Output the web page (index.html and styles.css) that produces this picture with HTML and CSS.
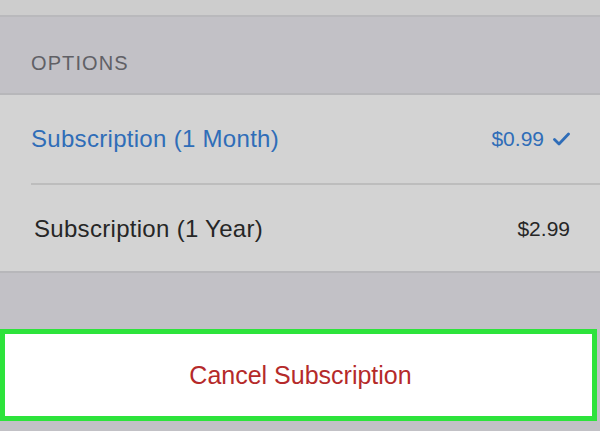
FILE: index.html
```html
<!DOCTYPE html>
<html lang="en">
<head>
    <meta charset="UTF-8">
    <meta name="viewport" content="width=device-width, initial-scale=1.0">
    <title>Subscription Options</title>
    <link rel="stylesheet" href="styles.css">
</head>
<body>
    <div class="screen">
        <div class="top-strip"></div>

        <div class="section-header">OPTIONS</div>

        <div class="options-list">
            <div class="option selected">
                <span class="option-name">Subscription (1 Month)</span>
                <span class="option-price">
                    $0.99
                    <svg class="check" width="17" height="14" viewBox="0 0 17 14">
                        <path d="M1.5 7.5 L6 12 L15.5 2" fill="none" stroke="#2f6db8" stroke-width="2.8" stroke-linecap="round" stroke-linejoin="round"/>
                    </svg>
                </span>
            </div>
            <div class="option">
                <span class="option-name">Subscription (1 Year)</span>
                <span class="option-price">$2.99</span>
            </div>
        </div>

        <div class="spacer"></div>

        <div class="cancel-wrap">
            <button class="cancel-btn">Cancel Subscription</button>
        </div>
    </div>
</body>
</html>
```

FILE: styles.css
```css
body {
    margin: 0;
    padding: 0;
    font-family: 'Liberation Sans', Arial, sans-serif;
    background-color: #c2c1c6;
    width: 600px;
    height: 431px;
    overflow: hidden;
}

.screen {
    display: flex;
    flex-direction: column;
    height: 431px;
}

.top-strip {
    height: 15px;
    background-color: #cdcdcd;
    border-bottom: 2px solid #b9b9bc;
}

.section-header {
    height: 78px;
    box-sizing: border-box;
    padding: 35px 0 0 31px;
    font-size: 20px;
    letter-spacing: 1.1px;
    color: #606065;
    background-color: #c2c1c6;
    border-bottom: 2px solid #b7b7ba;
}

.options-list {
    background-color: #d3d3d3;
    border-bottom: 2px solid #b7b7ba;
}

.option {
    display: flex;
    align-items: center;
    justify-content: space-between;
    height: 88px;
    margin-left: 31px;
    padding-right: 30px;
    box-sizing: border-box;
    font-size: 24px;
    color: #262626;
}

.option + .option {
    border-top: 2px solid #bdbdbd;
    padding-top: 2px;
}

.option-name {
    letter-spacing: 0.3px;
}

.option:nth-child(2) .option-name {
    padding-left: 3px;
}

.option-price {
    display: flex;
    align-items: center;
    gap: 9px;
    font-size: 21px;
}

.selected {
    color: #2f6db8;
}

.spacer {
    height: 56px;
}

.cancel-wrap {
    display: flex;
    padding-right: 3px;
}

.cancel-btn {
    width: 597px;
    height: 92px;
    background-color: #ffffff;
    border: 5px solid #2de33b;
    font-family: 'Liberation Sans', Arial, sans-serif;
    font-size: 25px;
    color: #b52a2a;
    padding: 0 0 0 4px;
}
```
